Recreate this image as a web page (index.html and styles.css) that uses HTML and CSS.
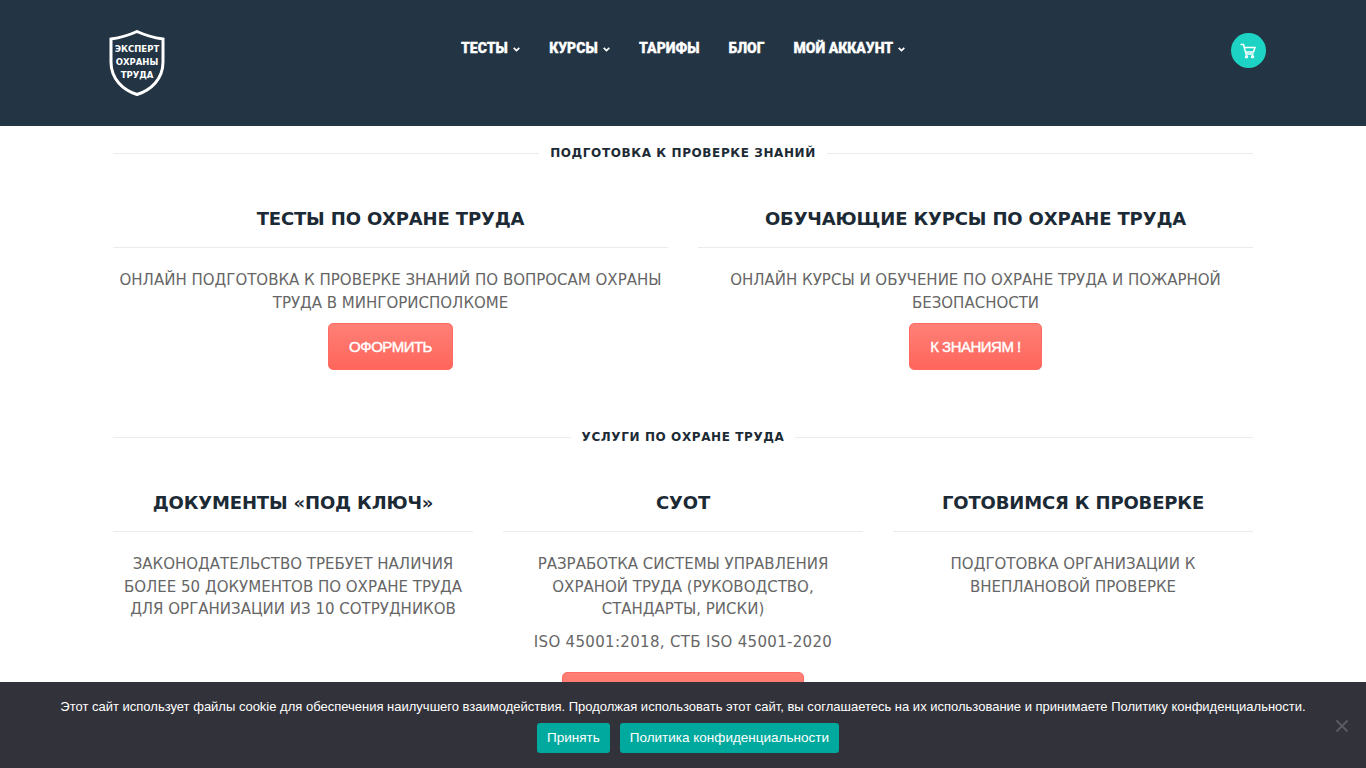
FILE: index.html
```html
<!DOCTYPE html>
<html lang="ru">
<head>
    <meta charset="UTF-8">
    <meta name="viewport" content="width=device-width, initial-scale=1.0">
    <title>Эксперт охраны труда</title>
    <link rel="stylesheet" href="styles.css">
</head>
<body>
    <header class="site-header">
        <a href="#" class="logo">
            <svg class="logo-shield" width="56" height="68" viewBox="0 0 56 68">
                <path d="M28 2.500 Q40 8 54 10 V33 C54 50 42 61 28 65.500 C14 61 2 50 2 33 V10 Q16 8 28 2.500 Z" fill="none" stroke="#fff" stroke-width="3"/>
            </svg>
            <span class="logo-text">ЭКСПЕРТ<br>ОХРАНЫ<br>ТРУДА</span>
        </a>
        <nav class="main-nav">
            <a href="#">ТЕСТЫ <svg class="caret" width="7" height="5" viewBox="0 0 7 5"><path d="M0.700 0.800 L3.500 3.600 L6.300 0.800" fill="none" stroke="#fff" stroke-width="1.700"/></svg></a>
            <a href="#">КУРСЫ <svg class="caret" width="7" height="5" viewBox="0 0 7 5"><path d="M0.700 0.800 L3.500 3.600 L6.300 0.800" fill="none" stroke="#fff" stroke-width="1.700"/></svg></a>
            <a href="#">ТАРИФЫ</a>
            <a href="#">БЛОГ</a>
            <a href="#">МОЙ АККАУНТ <svg class="caret" width="7" height="5" viewBox="0 0 7 5"><path d="M0.700 0.800 L3.500 3.600 L6.300 0.800" fill="none" stroke="#fff" stroke-width="1.700"/></svg></a>
        </nav>
        <a href="#" class="cart">
            <svg width="16" height="16" viewBox="0 0 16 16" fill="none" stroke="#fff" stroke-width="1.500">
                <path d="M0.500 1.500 H3.500 L6 11 H13.500"/>
                <path d="M4.200 4.500 H15 L13.500 9 H5.400"/>
                <circle cx="6.500" cy="13.700" r="1"/>
                <circle cx="12.500" cy="13.700" r="1"/>
            </svg>
        </a>
    </header>

    <main class="container">
        <div class="divider"><span>ПОДГОТОВКА К ПРОВЕРКЕ ЗНАНИЙ</span></div>
        <section class="columns columns-2">
            <div class="service">
                <h2>ТЕСТЫ ПО ОХРАНЕ ТРУДА</h2>
                <p>ОНЛАЙН ПОДГОТОВКА К ПРОВЕРКЕ ЗНАНИЙ ПО ВОПРОСАМ ОХРАНЫ ТРУДА В МИНГОРИСПОЛКОМЕ</p>
                <a href="#" class="btn btn-order">ОФОРМИТЬ</a>
            </div>
            <div class="service">
                <h2>ОБУЧАЮЩИЕ КУРСЫ ПО ОХРАНЕ ТРУДА</h2>
                <p>ОНЛАЙН КУРСЫ И ОБУЧЕНИЕ ПО ОХРАНЕ ТРУДА И ПОЖАРНОЙ БЕЗОПАСНОСТИ</p>
                <a href="#" class="btn btn-learn">К ЗНАНИЯМ !</a>
            </div>
        </section>

        <div class="divider"><span>УСЛУГИ ПО ОХРАНЕ ТРУДА</span></div>
        <section class="columns columns-3">
            <div class="service">
                <h2>ДОКУМЕНТЫ «ПОД КЛЮЧ»</h2>
                <p>ЗАКОНОДАТЕЛЬСТВО ТРЕБУЕТ НАЛИЧИЯ БОЛЕЕ 50 ДОКУМЕНТОВ ПО ОХРАНЕ ТРУДА ДЛЯ ОРГАНИЗАЦИИ ИЗ 10 СОТРУДНИКОВ</p>
            </div>
            <div class="service">
                <h2>СУОТ</h2>
                <p>РАЗРАБОТКА СИСТЕМЫ УПРАВЛЕНИЯ ОХРАНОЙ ТРУДА (РУКОВОДСТВО, СТАНДАРТЫ, РИСКИ)</p>
                <p class="iso">ISO 45001:2018, СТБ ISO 45001-2020</p>
                <a href="#" class="btn btn-wide"></a>
            </div>
            <div class="service">
                <h2>ГОТОВИМСЯ К ПРОВЕРКЕ</h2>
                <p>ПОДГОТОВКА ОРГАНИЗАЦИИ К ВНЕПЛАНОВОЙ ПРОВЕРКЕ</p>
            </div>
        </section>
    </main>

    <div class="cookie-notice">
        <p>Этот сайт использует файлы cookie для обеспечения наилучшего взаимодействия. Продолжая использовать этот сайт, вы соглашаетесь на их использование и принимаете Политику конфиденциальности.</p>
        <div class="cookie-buttons">
            <a href="#">Принять</a>
            <a href="#">Политика конфиденциальности</a>
        </div>
        <svg class="cookie-close" width="12" height="12" viewBox="0 0 12 12" stroke="#5a5b61" stroke-width="2">
            <path d="M0.500 0.500 L11.500 11.500 M11.500 0.500 L0.500 11.500"/>
        </svg>
    </div>
</body>
</html>
```

FILE: styles.css
```css
html, body {
    height: 100%;
    overflow: hidden;
}
body {
    font-family: "DejaVu Sans", sans-serif;
    margin: 0;
    padding: 0;
    background-color: #fff;
    color: #666;
}
a {
    text-decoration: none;
}
.site-header {
    display: flex;
    align-items: flex-start;
    height: 126px;
    background-color: #233544;
    box-sizing: border-box;
    padding: 29px 100px 0 109px;
}
.logo {
    position: relative;
    display: block;
    width: 56px;
    height: 68px;
    flex-shrink: 0;
}
.logo-text {
    position: absolute;
    top: 14px;
    left: 0;
    width: 56px;
    text-align: center;
    font-size: 8.500px;
    font-weight: bold;
    line-height: 13px;
    color: #fff;
}
.main-nav {
    display: flex;
    gap: 29px;
    margin-left: 296px;
    margin-top: 11px;
}
.main-nav a {
    font-family: Roboto, sans-serif;
    font-weight: 900;
    font-size: 14px;
    line-height: 17px;
    color: #fff;
    -webkit-text-stroke: 0.300px #fff;
}
.caret {
    margin-left: 2px;
    vertical-align: 1px;
}
.cart {
    display: flex;
    align-items: center;
    justify-content: center;
    width: 35px;
    height: 35px;
    margin-left: auto;
    margin-top: 4px;
    border-radius: 50%;
    background-color: #1dd4c4;
}
.cart svg {
    margin-left: -2px;
}
.container {
    width: 1140px;
    margin: 0 auto;
}
.divider {
    display: flex;
    align-items: center;
    gap: 11px;
    margin-top: 18px;
    height: 18px;
    font-size: 12px;
    font-weight: bold;
    letter-spacing: 0.600px;
    color: #1c2a35;
}
.divider::before,
.divider::after {
    content: "";
    flex: 1;
    border-top: 1px solid #e8ecec;
}
.columns {
    display: grid;
    gap: 30px;
    margin-top: 36px;
}
.columns-2 {
    grid-template-columns: 1fr 1fr;
    height: 212px;
}
.columns-3 {
    grid-template-columns: 1fr 1fr 1fr;
}
.service {
    text-align: center;
}
.service h2 {
    margin: 0 0 21px 0;
    padding: 9px 0 16px 0;
    font-size: 18px;
    line-height: 24px;
    font-weight: bold;
    letter-spacing: -0.150px;
    color: #1c2a35;
    border-bottom: 1px solid #e8ecec;
}
.service p {
    margin: 0 0 10px 0;
    font-size: 15px;
    line-height: 22.500px;
}
.columns-2 .service p {
    margin-bottom: 9px;
}
.service .iso {
    letter-spacing: 0.320px;
}
.btn {
    display: inline-block;
    box-sizing: border-box;
    height: 47px;
    line-height: 45px;
    font-family: "Liberation Sans", sans-serif;
    font-size: 15px;
    letter-spacing: -0.500px;
    color: #fff;
    -webkit-text-stroke: 0.400px #fff;
    border: 1px solid #ff6b62;
    border-radius: 5px;
    background: linear-gradient(#ff8077, #ff655b);
}
.btn-order {
    width: 125px;
}
.btn-learn {
    width: 133px;
}
.btn-wide {
    width: 242px;
    margin-top: 9px;
}
.cookie-notice {
    position: fixed;
    left: 0;
    right: 0;
    bottom: 0;
    height: 86px;
    background-color: #32323a;
    font-family: "Liberation Sans", sans-serif;
    font-size: 13px;
    color: #fff;
    text-align: center;
}
.cookie-notice p {
    margin: 17px 0 0 0;
    line-height: 16px;
}
.cookie-buttons {
    display: flex;
    justify-content: center;
    gap: 10px;
    margin-top: 8px;
    padding-left: 10px;
}
.cookie-buttons a {
    height: 30px;
    line-height: 30px;
    padding: 0 10px;
    border-radius: 3px;
    font-size: 13.500px;
    color: #fff;
    background-color: #00a99d;
}
.cookie-close {
    position: absolute;
    right: 18px;
    top: 38px;
}
```
